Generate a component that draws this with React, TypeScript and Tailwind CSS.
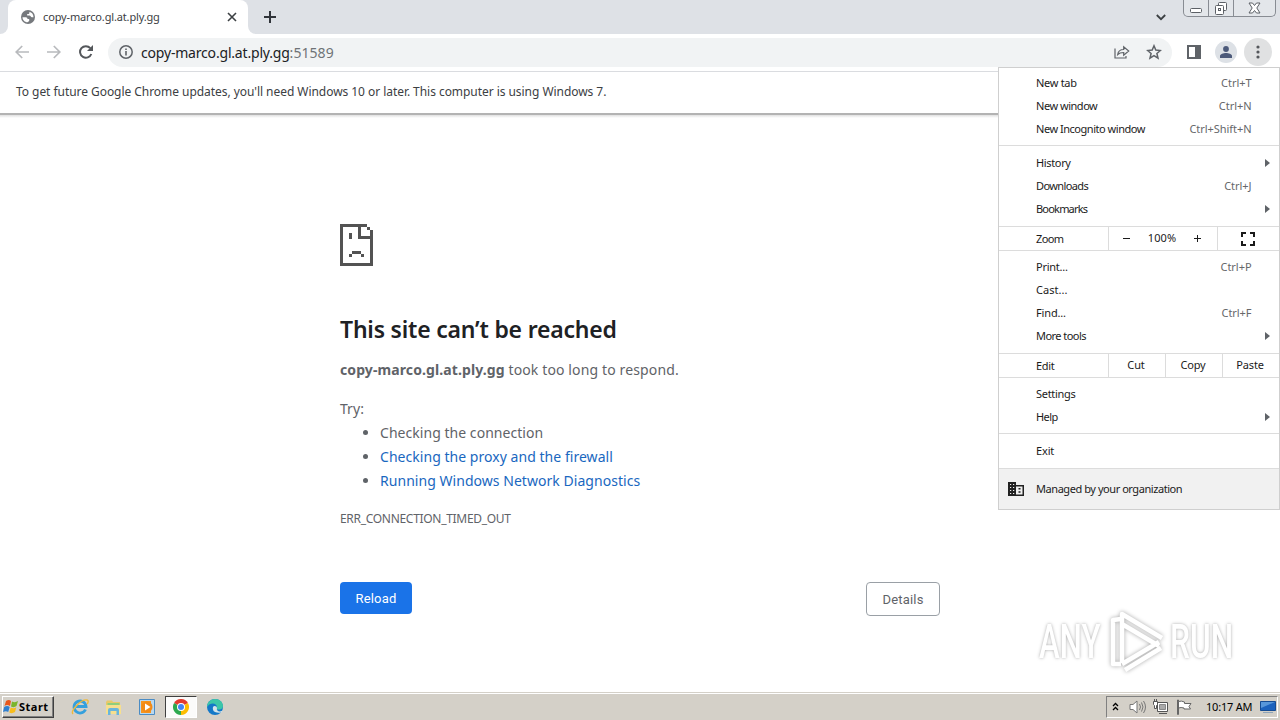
import type { ReactNode } from 'react'

interface MenuRowProps {
  label: string
  tracking?: string
  shortcut?: string
  submenu?: boolean
}

function MenuRow({ label, tracking = 'tracking-[-0.47px]', shortcut, submenu }: MenuRowProps) {
  return (
    <div className="h-[23px] pl-[37px] pr-[9px] flex items-center text-[#1b1b1b]">
      <span className={tracking}>{label}</span>
      {shortcut && <span className="ml-auto mr-[18.500px] text-[#66676a] tracking-[-0.05px]">{shortcut}</span>}
      {submenu && (
        <svg className="ml-auto mb-px" width="5" height="8" viewBox="0 0 5 8">
          <path d="M0 0l5 4-5 4z" fill="#5f6368" />
        </svg>
      )}
    </div>
  )
}

function Cell({ children, className = '' }: { children: ReactNode; className?: string }) {
  return <div className={`flex items-center justify-center border-l border-[#dcdcdc] pr-0.5 ${className}`}>{children}</div>
}

function TabStrip() {
  return (
    <div className="relative h-[34px] bg-[#dee1e6] flex pl-2">
      <div className="absolute left-0 bottom-0 w-2 h-2 bg-white">
        <div className="w-2 h-2 bg-[#dee1e6] rounded-br-lg" />
      </div>
      <div className="w-60 bg-white rounded-t-lg flex items-center pl-[13px] pr-[11px]">
        <svg width="14" height="14" viewBox="0 0 14 14">
          <circle cx="7" cy="7" r="7" fill="#76797d" />
          <path d="M1.500 7.200h3.300c1.400 0 1.700 1 1.700 1.800h1.700v2l-1.700 1.200C3.800 12.200 1.500 9.900 1.500 7.200z" fill="#fff" />
          <path d="M8.300 1.700c.5 1.500-.2 2.300-1.500 2.300-.8 0-.8.7-.6 1.500h2.200c1.300 0 1.200 1.600 2.500 1.700H12.500C12.500 4.300 10.800 2.200 8.300 1.700z" fill="#fff" />
        </svg>
        <span className="ml-2 text-[11px] text-[#3c4043] tracking-[-0.15px]">copy-marco.gl.at.ply.gg</span>
        <svg className="ml-auto" width="10" height="10" viewBox="0 0 10 10" stroke="#3c4043" strokeWidth="1.600">
          <path d="M1 1l8 8M9 1l-8 8" />
        </svg>
      </div>
      <div className="self-end w-2 h-2 bg-white">
        <div className="w-2 h-2 bg-[#dee1e6] rounded-bl-lg" />
      </div>
      <svg className="mt-[11px] ml-2" width="12" height="12" viewBox="0 0 12 12" stroke="#30343a" strokeWidth="2">
        <path d="M6 0v12M0 6h12" />
      </svg>
      <svg className="mt-[14px] ml-auto" width="10" height="7" viewBox="0 0 10 7" fill="none" stroke="#3c4043" strokeWidth="1.800">
        <path d="M.8 1l4.200 4.200L9.200 1" />
      </svg>
      {/* window controls */}
      <div className="ml-[17px] mr-1 w-[93px] h-[17px] flex border border-t-0 border-[#888c93] rounded-b-[5px] bg-[#e3e6ea]">
        <div className="w-[25px] flex justify-center border-r border-[#888c93]">
          <svg width="12" height="16" viewBox="0 0 12 16">
            <rect x=".5" y="8.500" width="11" height="4" rx="1" fill="#fff" stroke="#5c6066" />
          </svg>
        </div>
        <div className="w-[25px] flex justify-center border-r border-[#888c93]">
          <svg width="14" height="16" viewBox="0 0 14 16" fill="#fff" stroke="#5c6066">
            <rect x="4.500" y="2.500" width="8" height="8" rx="1" />
            <rect x="1.500" y="5.500" width="8" height="9" rx="1" />
            <rect x="4.500" y="8.500" width="2" height="2" />
          </svg>
        </div>
        <div className="flex-1 flex justify-center">
          <svg width="13" height="16" viewBox="0 0 13 16" fill="#fff" stroke="#5c6066">
            <path d="M1 3h3.500l2 2.500 2-2.500H12L8.800 8 12 13H8.500l-2-2.500-2 2.500H1l3.200-5z" />
          </svg>
        </div>
      </div>
    </div>
  )
}

function Toolbar() {
  return (
    <div className="h-[38px] flex items-center border-b border-[#dadce0] bg-white pl-[15px] pr-2 pb-px">
      <svg width="14" height="14" viewBox="0 0 14 14" fill="none" stroke="#b8babd" strokeWidth="1.700">
        <path d="M14 7H1.500M7.200 1L1.200 7l6 6" />
      </svg>
      <svg className="ml-[18px]" width="14" height="14" viewBox="0 0 14 14" fill="none" stroke="#b8babd" strokeWidth="1.700">
        <path d="M0 7h12.500M6.800 1l6 6-6 6" />
      </svg>
      <svg className="ml-[18px]" width="14" height="14" viewBox="0 0 14 14">
        <path d="M12.300 9A5.800 5.800 0 1 1 11.300 3.200" fill="none" stroke="#54575b" strokeWidth="2" />
        <path d="M14 0v6H8z" fill="#54575b" />
      </svg>
      <div className="ml-[15px] w-[1064px] h-[29px] rounded-full bg-[#f1f3f4] flex items-center pl-[11px] pr-[10px]">
        <svg width="14" height="14" viewBox="0 0 14 14">
          <circle cx="7" cy="7" r="6.200" fill="none" stroke="#5f6368" strokeWidth="1.500" />
          <path d="M6.200 6h1.600v4.500H6.200zM6.200 3.400h1.600V5H6.200z" fill="#5f6368" />
        </svg>
        <span className="ml-2 text-[14px] text-[#202124] tracking-[-0.19px]">
          copy-marco.gl.at.ply.gg<span className="text-[#6f7377] tracking-[0.05px]">:51589</span>
        </span>
        <svg className="ml-auto" width="16" height="14" viewBox="0 0 16 14" fill="none" stroke="#5f6368" strokeWidth="1.200">
          <path d="M1 3.500v9.500h11v-2" />
          <path d="M3.700 9.500c.5-3.500 2.500-5 6-5V1.700l5 4.300-5 4.200V7.500c-2.800 0-4.500.4-6 2z" />
        </svg>
        <svg className="ml-4" width="16" height="16" viewBox="0 0 16 16" fill="none" stroke="#5f6368" strokeWidth="1.500">
          <path d="M8 1.800l1.800 4.300 4.600.4-3.500 3 1.100 4.600L8 11.600l-4 2.500 1.100-4.600-3.500-3 4.600-.4z" />
        </svg>
      </div>
      <svg className="ml-[15px]" width="14" height="14" viewBox="0 0 14 14">
        <path d="M0 0h14v14H0zM2 2v10h6V2z" fill="#5f6368" fillRule="evenodd" />
      </svg>
      <div className="ml-[14px] w-[22px] h-[22px] rounded-full bg-[#dde1e6] flex items-center justify-center">
        <svg width="12" height="12" viewBox="0 0 12 12" fill="#4c5a7a">
          <circle cx="6" cy="3" r="2.900" />
          <path d="M0 12V10c0-2 3.500-3 6-3s6 1 6 3v2z" />
        </svg>
      </div>
      <div className="ml-[7px] w-7 h-7 rounded-full bg-[#e0e1e2] flex items-center justify-center">
        <svg width="4" height="14" viewBox="0 0 4 14" fill="#54575b">
          <circle cx="2" cy="2" r="1.600" />
          <circle cx="2" cy="7" r="1.600" />
          <circle cx="2" cy="12" r="1.600" />
        </svg>
      </div>
    </div>
  )
}

function AppMenu() {
  return (
    <div className="absolute left-[998px] top-[67px] w-[282px] h-[443px] bg-white border border-[#cfcfcf] text-[11px] tracking-[-0.15px]">
      <div className="pt-1 pb-1">
        <MenuRow label="New tab" shortcut="Ctrl+T" tracking="tracking-[-0.3px]" />
        <MenuRow label="New window" shortcut="Ctrl+N" />
        <MenuRow label="New Incognito window" shortcut="Ctrl+Shift+N" />
      </div>
      <div className="border-t border-[#dcdcdc] pt-1.5 pb-[5px]">
        <MenuRow label="History" submenu tracking="tracking-[-0.35px]" />
        <MenuRow label="Downloads" shortcut="Ctrl+J" tracking="tracking-[-0.6px]" />
        <MenuRow label="Bookmarks" submenu tracking="tracking-[-0.8px]" />
      </div>
      <div className="border-y border-[#dcdcdc] h-[25px] flex text-[#1b1b1b]">
        <span className="w-[109px] pl-[37px] pt-px flex items-center tracking-[-0.6px]">Zoom</span>
        <Cell className="w-[109px]">
          <svg width="7" height="7" viewBox="0 0 7 7" stroke="#1b1b1b">
            <path d="M0 3.500h7" />
          </svg>
          <span className="w-[64px] text-center tracking-[0.1px]">100%</span>
          <svg width="7" height="7" viewBox="0 0 7 7" stroke="#1b1b1b">
            <path d="M0 3.500h7M3.500 0v7" />
          </svg>
        </Cell>
        <Cell className="flex-1">
          <svg width="14" height="14" viewBox="0 0 14 14" fill="none" stroke="#1b1b1b" strokeWidth="2">
            <path d="M1 5V1h4M9 1h4v4M13 9v4H9M5 13H1V9" />
          </svg>
        </Cell>
      </div>
      <div className="pt-[5px] pb-[5px]">
        <MenuRow label="Print..." shortcut="Ctrl+P" tracking="tracking-[-0.25px]" />
        <MenuRow label="Cast..." tracking="tracking-[0.05px]" />
        <MenuRow label="Find..." shortcut="Ctrl+F" tracking="tracking-[-0.15px]" />
        <MenuRow label="More tools" submenu tracking="tracking-[-0.55px]" />
      </div>
      <div className="border-y border-[#dcdcdc] h-[25px] flex text-[#1b1b1b]">
        <span className="w-[109px] pl-[37px] pt-px flex items-center tracking-[-0.3px]">Edit</span>
        <Cell className="w-[57px]">Cut</Cell>
        <Cell className="w-[57px]">Copy</Cell>
        <Cell className="flex-1">Paste</Cell>
      </div>
      <div className="pt-[5px] pb-1">
        <MenuRow label="Settings" tracking="tracking-[-0.3px]" />
        <MenuRow label="Help" submenu tracking="tracking-[-0.6px]" />
      </div>
      <div className="border-t border-[#dcdcdc] pt-1.5 pb-[5px]">
        <MenuRow label="Exit" tracking="tracking-[-0.15px]" />
      </div>
      <div className="border-t border-[#dcdcdc] h-[41px] bg-[#f1f1f1] flex items-center pl-[9px] text-[#1b1b1b]">
        <svg width="16" height="14" viewBox="0 0 16 14">
          <path
            d="M0 0h8v3h8v11H0zM2 2v1h1.200V2zM5 2v1h1.200V2zM2 5v1h1.200V5zM5 5v1h1.200V5zM2 8v1h1.200V8zM5 8v1h1.200V8zM2 11v1h1.200v-1zM5 11v1h1.200v-1zM8 4.600v7.800h6.500V4.600zM10.500 6h2v1.600h-2zM10.500 9.200h2v1.600h-2z"
            fill="#222"
            fillRule="evenodd"
          />
        </svg>
        <span className="ml-3 tracking-[-0.44px]">Managed by your organization</span>
      </div>
    </div>
  )
}

function ErrorPage() {
  return (
    <div className="flex-1 flex flex-col items-start w-[600px] ml-[340px] pt-[106px] text-[14px] text-[#5f6368] tracking-[0.04px]">
      <svg width="33" height="42" viewBox="0 0 11 14" fill="#535353" shapeRendering="crispEdges">
        <path d="M0 0h9v1H7v3h3V2h1v12H0zM1 1v12h9V5H6V1z" fillRule="evenodd" />
        <path d="M9 1h1v1H9zM3 3h1v2H3zM4 9h3v1H4zM3 10h1v1H3zM7 10h1v1H7z" />
      </svg>
      <h1 className="mt-12 h-[30px] leading-[30px] text-[23px] font-semibold text-[#202124] whitespace-nowrap tracking-[-0.2px]">
        This site can’t be reached
      </h1>
      <p className="mt-[14px] leading-6 whitespace-nowrap">
        <b className="tracking-[0.1px]">copy-marco.gl.at.ply.gg</b>
        <span className="tracking-[0.13px]"> took too long to respond.</span>
      </p>
      <p className="mt-[15px] leading-6">Try:</p>
      <ul className="list-disc pl-10 leading-6 whitespace-nowrap">
        <li>Checking the connection</li>
        <li>
          <a className="text-[#1967c0]">Checking the proxy and the firewall</a>
        </li>
        <li>
          <a className="text-[#1967c0]">Running Windows Network Diagnostics</a>
        </li>
      </ul>
      <p className="mt-[17px] leading-[18px] text-[12px] tracking-[-0.3px]">ERR_CONNECTION_TIMED_OUT</p>
      <div className="mt-[54px] w-full flex justify-between items-start font-['Roboto',sans-serif] text-[13px] tracking-[0.2px]">
        <button className="w-[72px] h-8 pt-0.5 rounded bg-[#1a73e8] text-white">Reload</button>
        <button className="w-[74px] h-[34px] pt-0.5 rounded border border-[#9aa0a6] text-[#5f6368]">Details</button>
      </div>
    </div>
  )
}

function Watermark() {
  return (
    <div className="absolute left-[1039px] top-[609px] w-[200px] h-[66px] flex items-center justify-between font-['Roboto',sans-serif] font-medium text-[48px] leading-[66px] text-white [text-shadow:0_0_4px_#a8a8a8]">
      <span className="w-[66px] origin-left scale-x-[0.65] whitespace-nowrap">ANY</span>
      <svg className="[filter:drop-shadow(0_0_2px_#a8a8a8)]" width="60" height="64" viewBox="0 0 60 64" fill="none" stroke="#fff" strokeWidth="4.500" strokeLinejoin="round">
        <path d="M13 9l-8 1v44h8" />
        <path d="M14 53V4l40 24M14 14l37 22M14 54l37-22M17 60l36-22" />
      </svg>
      <span className="w-[69px] origin-left scale-x-[0.66] whitespace-nowrap">RUN</span>
    </div>
  )
}

function Taskbar() {
  return (
    <div className="h-[28px] bg-[#d4d0c8] border-t border-[#d4d0c8]">
      <div className="h-[27px] border-t border-white flex items-center pl-0.5 pr-0.5 text-[11px] text-black">
        <div className="w-[52px] h-[22px] flex items-center border border-t-white border-l-white border-r-[#404040] border-b-[#404040] shadow-[inset_-1px_-1px_0_#808080] font-bold">
          <svg width="16" height="16" viewBox="0 0 16 16">
            <path d="M3 2q3-2 5 0L7 7Q4 5 1.500 7z" fill="#e8571c" />
            <path d="M9 2.500q3 1.500 6-.5l-1.500 5Q11 9 8 7.500z" fill="#7bb52c" />
            <path d="M1.200 8q3-2 5.500 0l-1.500 5Q3 11.500 0 13z" fill="#2e7fd0" />
            <path d="M7.700 8.500q3 1.500 5.600-.3L12 13q-3 2-5.700.5z" fill="#f8bd1d" />
          </svg>
          <span className="tracking-[0.5px]">Start</span>
        </div>
        {/* Internet Explorer */}
        <svg className="ml-[17px]" width="18" height="18" viewBox="0 0 18 18" fill="none">
          <path d="M14.500 11.500A6 6 0 1 1 15 8.500H5" stroke="#35a0dd" strokeWidth="2.800" />
          <path d="M2 16C-1 13 10 1 16 2c2 .5 1 3 0 4" stroke="#efb93b" strokeWidth="1.400" />
        </svg>
        {/* Explorer */}
        <svg className="ml-4" width="17" height="17" viewBox="0 0 17 17">
          <path d="M1 3l1-1.500h5L8 3h7v5H1z" fill="#e9c968" />
          <path d="M2.500 4h12v4h-12z" fill="#8fce7c" />
          <path d="M1 6h15v9H1z" fill="#f7df8e" />
          <path d="M3 16v-5q0-2 2-2h7q2 0 2 2v5h-2.500v-4h-6v4z" fill="#69b5dc" />
        </svg>
        {/* Media Player */}
        <svg className="ml-[17px]" width="16" height="16" viewBox="0 0 16 16">
          <path d="M.5.5h15v15H.5z" fill="#b9d8f0" stroke="#4b8cc4" />
          <path d="M2 2h10v12H2z" fill="#f7941d" />
          <circle cx="8" cy="8" r="5.500" fill="#f28a16" />
          <path d="M6 4.500v7L11.500 8z" fill="#fff" />
        </svg>
        {/* Chrome, active */}
        <div className="ml-[10px] w-[32px] h-[22px] bg-[#fbfbfa] border border-t-[#404040] border-l-[#404040] border-r-white border-b-white flex items-center justify-center">
          <svg width="16" height="16" viewBox="0 0 16 16">
            <path d="M8 8L1.070 4A8 8 0 0 1 14.930 4z" fill="#e33b2e" />
            <path d="M8 8L1.070 4A8 8 0 0 0 8 16z" fill="#2da94f" />
            <path d="M8 8l6.930-4A8 8 0 0 1 8 16z" fill="#fdbd00" />
            <circle cx="8" cy="8" r="4" fill="#fff" />
            <circle cx="8" cy="8" r="3" fill="#4285f4" />
          </svg>
        </div>
        {/* Edge */}
        <svg className="ml-[10px]" width="16" height="16" viewBox="0 0 16 16">
          <circle cx="8" cy="8" r="8" fill="#1478c8" />
          <path d="M0 8C0 3 4 0 8 0c5 0 8 3.500 8 7 0 3-3 4-6 3.500-1-.3 0-1 0-2.500C9.500 3.500 3 3 0 8z" fill="#3cc6a8" />
          <path d="M6 8c-1 4 2 6.500 8 5.500 1-.3 1.500-.5 1-1.500-3 1-6 0-5-3 0-2-3-3-4-1z" fill="#d4e4ea" />
        </svg>
        {/* tray */}
        <div className="ml-auto w-[172px] h-[22px] flex items-center border border-t-[#808080] border-l-[#808080] border-r-white border-b-white pl-[5px]">
          <svg className="mb-0.5" width="7" height="9" viewBox="0 0 7 9" fill="none" stroke="#000" strokeWidth="1.300">
            <path d="M1 4l2.500-2.500L6 4M1 8l2.500-2.500L6 8" />
          </svg>
          <svg className="ml-[10px]" width="17" height="16" viewBox="0 0 17 16" fill="none" stroke="#777">
            <path d="M1 5.500h3L8 2v12l-4-3.500H1z" fill="#fff" />
            <path d="M10.500 5q2 3 0 6M12.500 3.500q3 4.500 0 9M14.500 2q4 6 0 12" />
          </svg>
          <svg className="ml-[6px]" width="17" height="16" viewBox="0 0 17 16" fill="#fff" stroke="#555">
            <path d="M5.500 3.500h10v9h-10z" />
            <path d="M7.500 5.500h6v5h-6z" fill="#aaa" stroke="#888" />
            <path d="M7 14.500h8" />
            <path d="M1.500 2.500h4v3l-1 1v3h-2v-3l-1-1zM2.500 0v2M4.500 0v2" />
          </svg>
          <svg className="ml-[7px]" width="17" height="16" viewBox="0 0 17 16" fill="#fff" stroke="#666">
            <path d="M1.500 1v14.500h1V1z" />
            <path d="M2.500 2.500q3-1 6 .5v1.500h6.500l-2 3 1.500 2.500H8V9q-3-1-5.500 0z" />
          </svg>
          <span className="ml-[13px] whitespace-nowrap tracking-[-0.2px]">10:17 AM</span>
          <svg className="ml-auto mr-px" width="16" height="14" viewBox="0 0 16 14">
            <path d="M.5 1.500h15v9H.5z" fill="#1c62bd" stroke="#164c93" />
            <path d="M1 2h14L1 8z" fill="#5897da" />
            <path d="M3 12h10v1H3z" fill="#8fa4b8" />
          </svg>
        </div>
      </div>
    </div>
  )
}

export default function App() {
  return (
    <div className="relative w-[1280px] h-[720px] overflow-hidden bg-white flex flex-col font-['Noto_Sans',sans-serif]">
      <TabStrip />
      <Toolbar />
      <div className="h-[41px] shrink-0 flex items-center pl-4 pb-px text-[12px] text-[#3c4043] whitespace-nowrap tracking-[-0.05px]">
        To get future Google Chrome updates, you'll need Windows 10 or later. This computer is using Windows 7.
      </div>
      <div className="h-[5px] border-t-2 border-[#b3b3b3] bg-linear-to-b from-[#e0e0e0] to-white" />
      <ErrorPage />
      <Taskbar />
      <Watermark />
      <AppMenu />
    </div>
  )
}
